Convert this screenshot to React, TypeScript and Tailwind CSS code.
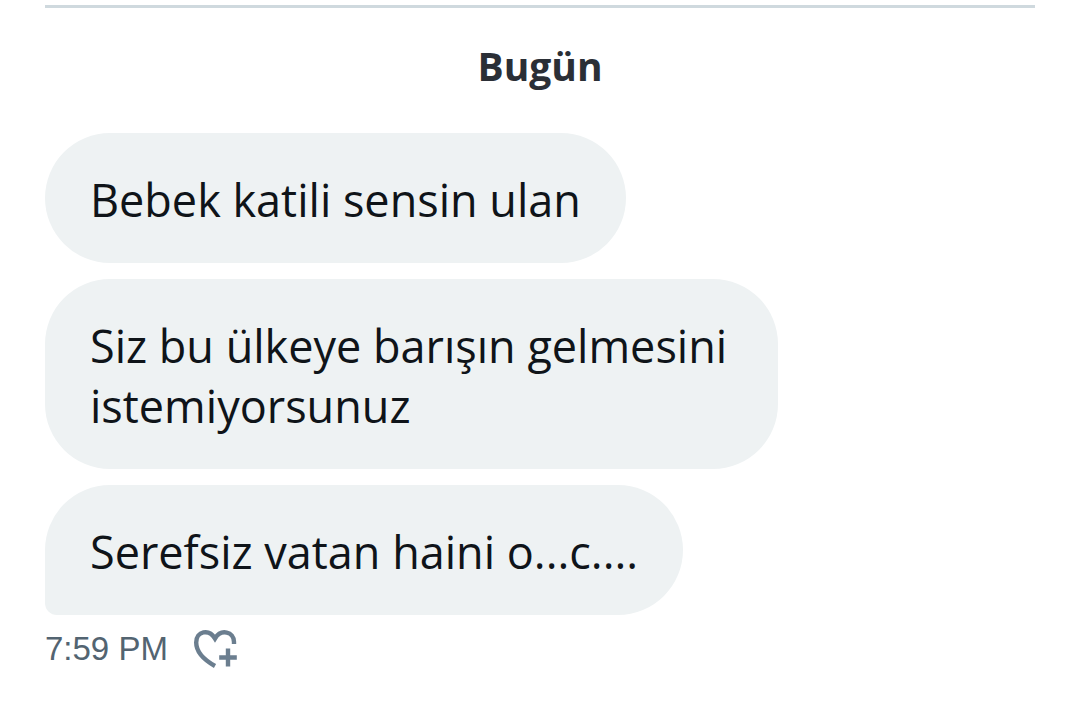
const MESSAGES = [
  { text: 'Bebek katili sensin ulan', shape: 'rounded-[65px]' },
  { text: 'Siz bu ülkeye barışın gelmesini istemiyorsunuz', shape: 'rounded-[65px]' },
  { text: 'Serefsiz vatan haini o...c....', shape: 'rounded-[65px] rounded-bl-xl' },
];

function HeartPlusIcon() {
  return (
    <svg viewBox="0 0 44 40" className="h-10 w-11" fill="none" stroke="currentColor" strokeWidth="4.4" aria-hidden="true">
      <path d="M22 37C9.5 30 3.2 21.5 3.2 13.5C3.2 2 16 -.5 22 9.5C28 -.5 41 2.5 41 13V15" />
      <path d="M35 19.5V37.5M26.2 28.5H43.8" />
    </svg>
  );
}

export default function App() {
  return (
    <main className="min-h-screen bg-white px-[45px] pt-[5px] font-['Open_Sans',sans-serif] text-[#0f1419]">
      <hr className="border-t-3 border-[#cfd9de]" />
      <h2 className="mt-[30px] text-center text-[39px] leading-[56px] font-bold text-[#2b2f36]">Bugün</h2>
      <ul className="mt-[39px] flex flex-col items-start gap-4">
        {MESSAGES.map((message) => (
          <li
            key={message.text}
            className={`max-w-[74%] bg-[#eef2f3] px-[45px] pt-[37px] pb-[33px] text-[45px] leading-[60px] ${message.shape}`}
          >
            {message.text}
          </li>
        ))}
      </ul>
      <footer className="mt-3 flex items-center gap-[25px] text-[#536471]">
        <time className="font-['Liberation_Sans',sans-serif] text-[33px] leading-[44px]">7:59 PM</time>
        <button type="button" aria-label="Add reaction" className="text-[#6b7e8f]">
          <HeartPlusIcon />
        </button>
      </footer>
    </main>
  );
}
